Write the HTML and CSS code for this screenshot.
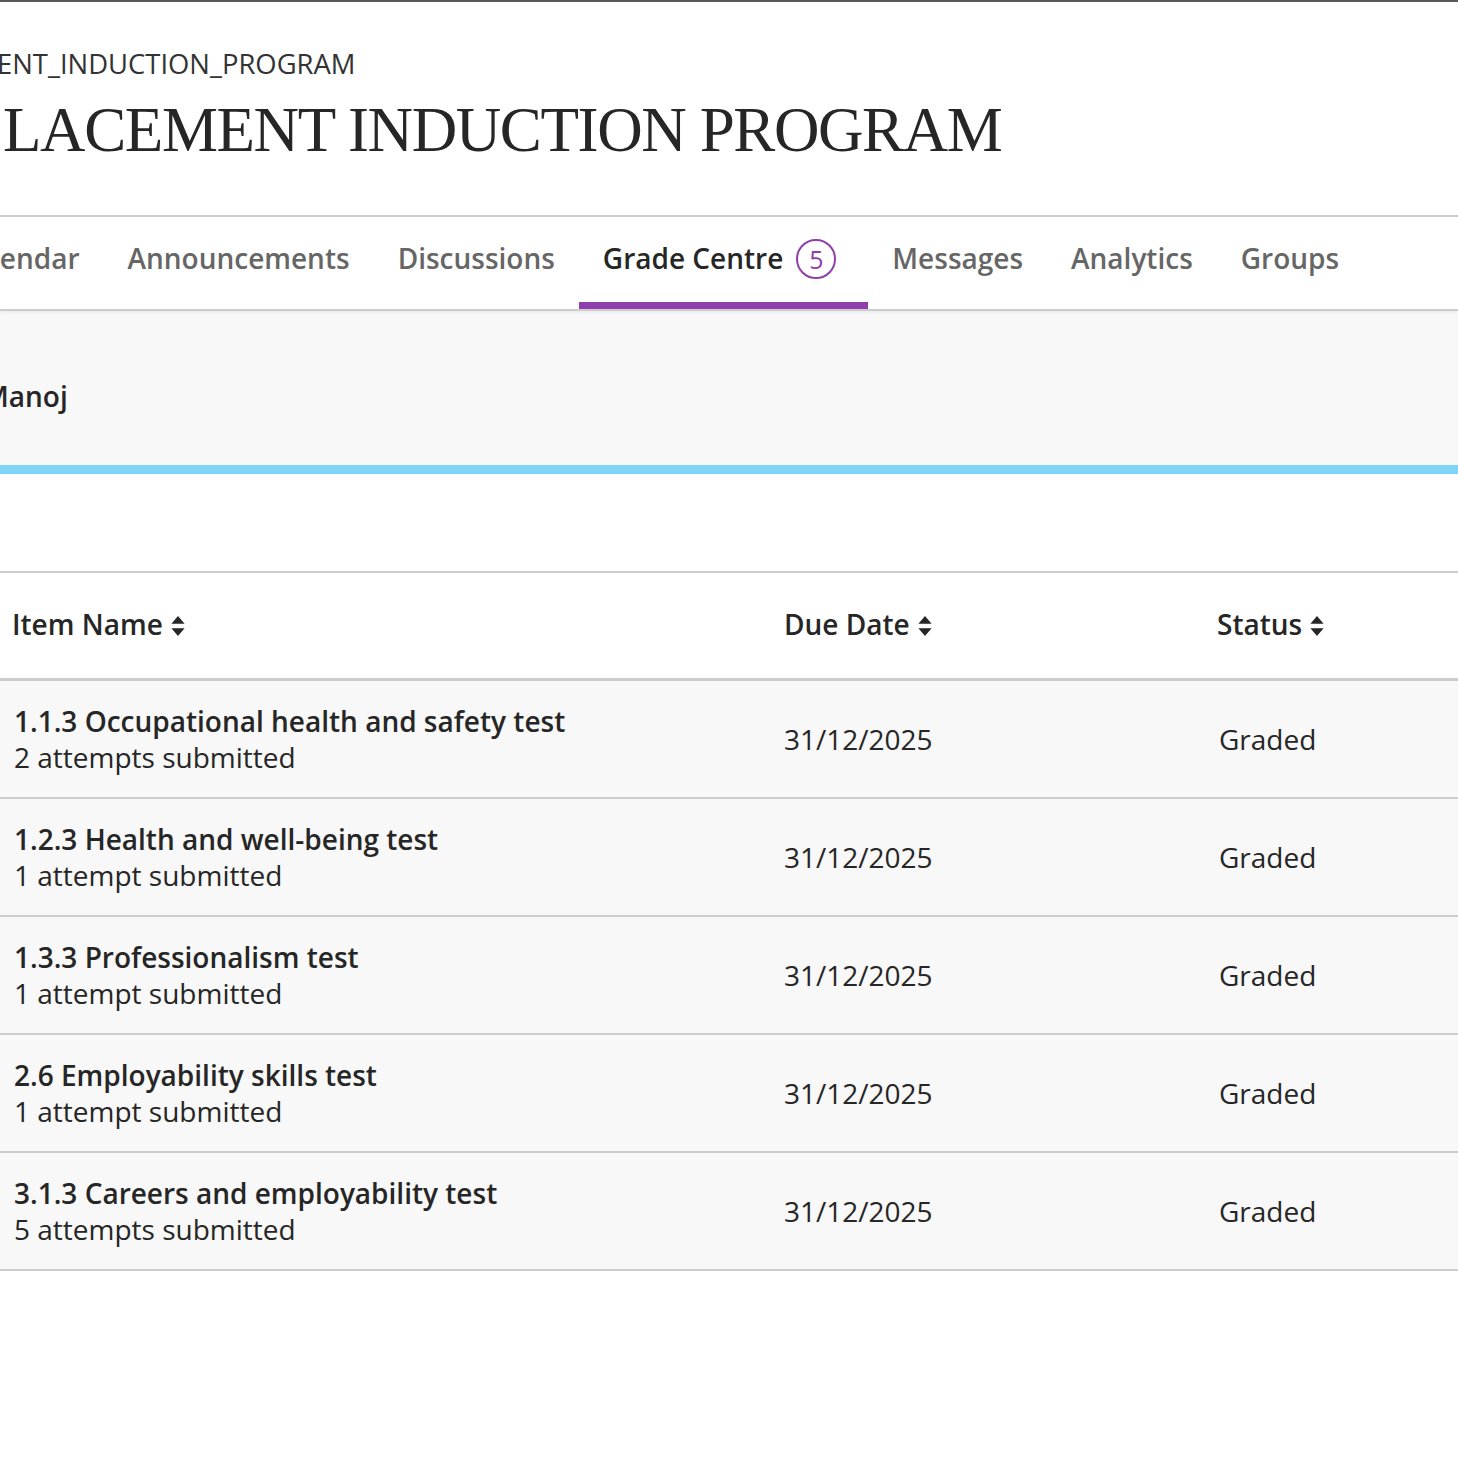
FILE: index.html
```html
<!DOCTYPE html>
<html lang="en">
<head>
<meta charset="utf-8">
<title>Grade Centre</title>
<link rel="stylesheet" href="styles.css">
</head>
<body>
<div class="page">
  <header class="course-header">
    <div class="course-id">ENT_INDUCTION_PROGRAM</div>
    <h1 class="course-title">LACEMENT INDUCTION PROGRAM</h1>
  </header>
  <nav class="tabs">
    <a class="tab tab-first">Calendar</a>
    <a class="tab">Announcements</a>
    <a class="tab">Discussions</a>
    <a class="tab active">Grade Centre <span class="badge">5</span></a>
    <a class="tab">Messages</a>
    <a class="tab">Analytics</a>
    <a class="tab">Groups</a>
  </nav>
  <section class="student-band">
    <div class="student-name">Manoj</div>
  </section>
  <div class="accent-bar"></div>
  <div class="spacer"></div>
  <div class="grades">
    <div class="grid-row head">
      <div class="col-name">Item Name <span class="sort"><svg viewBox="0 0 12 20" width="16" height="22"><path d="M6 1 L12 8 H0 Z M6 19 L12 12 H0 Z" fill="#262626"/></svg></span></div>
      <div class="col-date">Due Date <span class="sort"><svg viewBox="0 0 12 20" width="16" height="22"><path d="M6 1 L12 8 H0 Z M6 19 L12 12 H0 Z" fill="#262626"/></svg></span></div>
      <div class="col-status">Status <span class="sort"><svg viewBox="0 0 12 20" width="16" height="22"><path d="M6 1 L12 8 H0 Z M6 19 L12 12 H0 Z" fill="#262626"/></svg></span></div>
    </div>
    <div class="grid-row item">
      <div class="col-name"><div class="item-title">1.1.3 Occupational health and safety test</div><div class="item-sub">2 attempts submitted</div></div>
      <div class="col-date">31/12/2025</div>
      <div class="col-status">Graded</div>
    </div>
    <div class="grid-row item">
      <div class="col-name"><div class="item-title">1.2.3 Health and well-being test</div><div class="item-sub">1 attempt submitted</div></div>
      <div class="col-date">31/12/2025</div>
      <div class="col-status">Graded</div>
    </div>
    <div class="grid-row item">
      <div class="col-name"><div class="item-title">1.3.3 Professionalism test</div><div class="item-sub">1 attempt submitted</div></div>
      <div class="col-date">31/12/2025</div>
      <div class="col-status">Graded</div>
    </div>
    <div class="grid-row item">
      <div class="col-name"><div class="item-title">2.6 Employability skills test</div><div class="item-sub">1 attempt submitted</div></div>
      <div class="col-date">31/12/2025</div>
      <div class="col-status">Graded</div>
    </div>
    <div class="grid-row item">
      <div class="col-name"><div class="item-title">3.1.3 Careers and employability test</div><div class="item-sub">5 attempts submitted</div></div>
      <div class="col-date">31/12/2025</div>
      <div class="col-status">Graded</div>
    </div>
  </div>
</div>
</body>
</html>
```
FILE: styles.css
```css
html, body {
  margin: 0;
  padding: 0;
  background: #ffffff;
}
body {
  font-family: "Open Sans", "Noto Sans", sans-serif;
  color: #262626;
  overflow: hidden;
}
.page {
  width: 1458px;
  min-height: 1458px;
  border-top: 2px solid #5a5a5a;
  overflow: hidden;
}
.course-header {
  padding-top: 44px;
  height: 168px;
  box-sizing: border-box;
}
.course-id {
  font-size: 27.4px;
  line-height: 36px;
  color: #333333;
  margin-left: -3px;
}
.course-title {
  margin: 13px 0 0 3px;
  font-family: "Liberation Serif", "DejaVu Serif", serif;
  font-weight: 400;
  font-size: 63px;
  letter-spacing: -1.4px;
  line-height: 70px;
  color: #262626;
}
.tabs {
  display: flex;
  border-top: 2px solid #cdcdcd;
  border-bottom: 2px solid #cdcdcd;
  height: 92px;
  margin-top: 45px;
  box-shadow: 0 2px 3px rgba(0,0,0,0.06);
  position: relative;
}
.tab {
  display: flex;
  align-items: center;
  padding: 0 24px 10px;
  font-size: 28px;
  font-weight: 600;
  color: #666666;
  white-space: nowrap;
  position: relative;
}
.tab-first {
  margin-left: -66px;
}
.tab.active {
  color: #262626;
  padding-right: 32px;
}
.tab.active::after {
  content: "";
  position: absolute;
  left: 0;
  right: 0;
  bottom: 0;
  height: 7px;
  background: #8f3fab;
}
.badge {
  display: inline-flex;
  align-items: center;
  justify-content: center;
  width: 36px;
  height: 36px;
  border: 2px solid #8f3fab;
  border-radius: 50%;
  color: #8f3fab;
  font-size: 25px;
  font-weight: 400;
  margin-left: 13px;
  margin-top: 2px;
}
.student-band {
  background: #f8f8f8;
  height: 154px;
  display: flex;
  align-items: center;
}
.student-name {
  font-size: 28px;
  font-weight: 600;
  margin-left: -17px;
  margin-top: 16px;
}
.accent-bar {
  height: 9px;
  background: #80d4f7;
}
.spacer {
  height: 97px;
}
.grades {
  border-top: 2px solid #cdcdcd;
}
.grid-row {
  display: grid;
  grid-template-columns: 772px 433px 1fr;
  align-items: center;
}
.grid-row.head {
  height: 105px;
  border-bottom: 3px solid #cdcdcd;
  font-size: 28px;
  font-weight: 600;
}
.grid-row.head > div { padding-bottom: 3px; }
.grid-row.head .col-name { padding-left: 12px; }
.grid-row.head .col-date { padding-left: 12px; }
.grid-row.head .col-status { padding-left: 12px; }
.sort svg {
  vertical-align: -2px;
}
.grid-row.item {
  height: 116px;
  background: #f8f8f8;
  border-bottom: 2px solid #cdcdcd;
  font-size: 28px;
}
.grid-row.item .col-name { padding-left: 14px; }
.grid-row.item .col-date { padding-left: 12px; }
.grid-row.item .col-status { padding-left: 14px; }
.item-title {
  font-weight: 600;
  line-height: 36px;
}
.item-sub {
  font-weight: 400;
  line-height: 36px;
}
```
